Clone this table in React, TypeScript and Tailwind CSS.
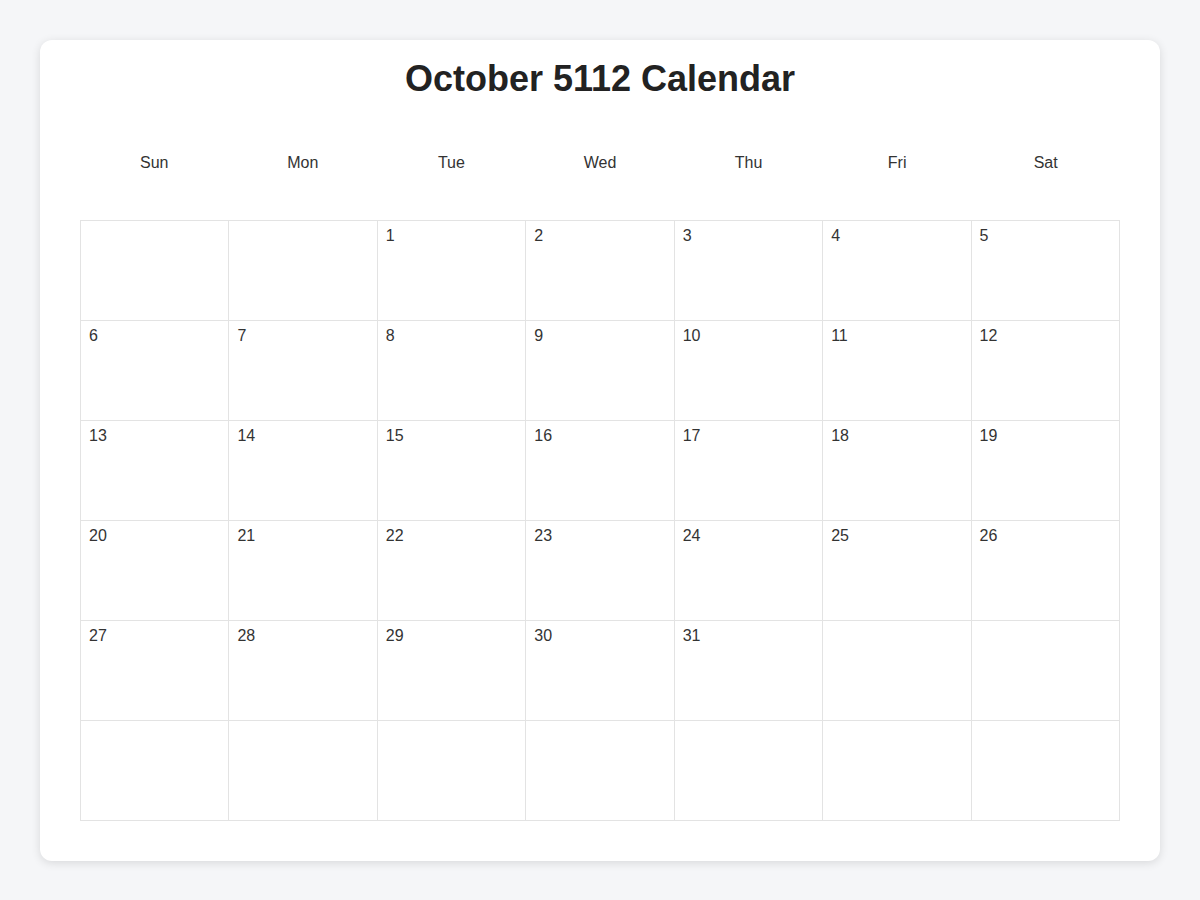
import React from 'react';

const DAYS = ['Sun', 'Mon', 'Tue', 'Wed', 'Thu', 'Fri', 'Sat'];

// October 5112 starts on a Tuesday, 31 days, 6 rows
const buildCells = () => {
    const cells: (number | null)[] = [];
    for (let i = 0; i < 2; i++) cells.push(null);
    for (let d = 1; d <= 31; d++) cells.push(d);
    while (cells.length < 42) cells.push(null);
    return cells;
};

const App: React.FC = () => {
    const cells = buildCells();

    return (
        <div className="min-h-screen bg-[#f5f6f8] p-10 font-['Liberation_Sans',Arial,sans-serif] text-[#333]">
            <div className="bg-white rounded-xl shadow-[0_2px_10px_rgba(0,0,0,0.12)] px-10 pt-[18px] pb-10">
                <h1 className="text-[36px] leading-[41px] font-bold text-center text-[#222] mb-[40px]">
                    October 5112 Calendar
                </h1>

                <div className="grid grid-cols-7">
                    {DAYS.map(day => (
                        <div key={day} className="h-[48px] flex items-center justify-center text-base">
                            {day}
                        </div>
                    ))}
                </div>

                <div className="grid grid-cols-7 mt-[33px] border-l border-t border-[#e3e3e3]">
                    {cells.map((d, i) => (
                        <div key={i} className="h-[100px] border-r border-b border-[#e3e3e3] px-2 pt-[3px] text-base leading-6">
                            {d ?? ''}
                        </div>
                    ))}
                </div>
            </div>
        </div>
    );
};

export default App;
